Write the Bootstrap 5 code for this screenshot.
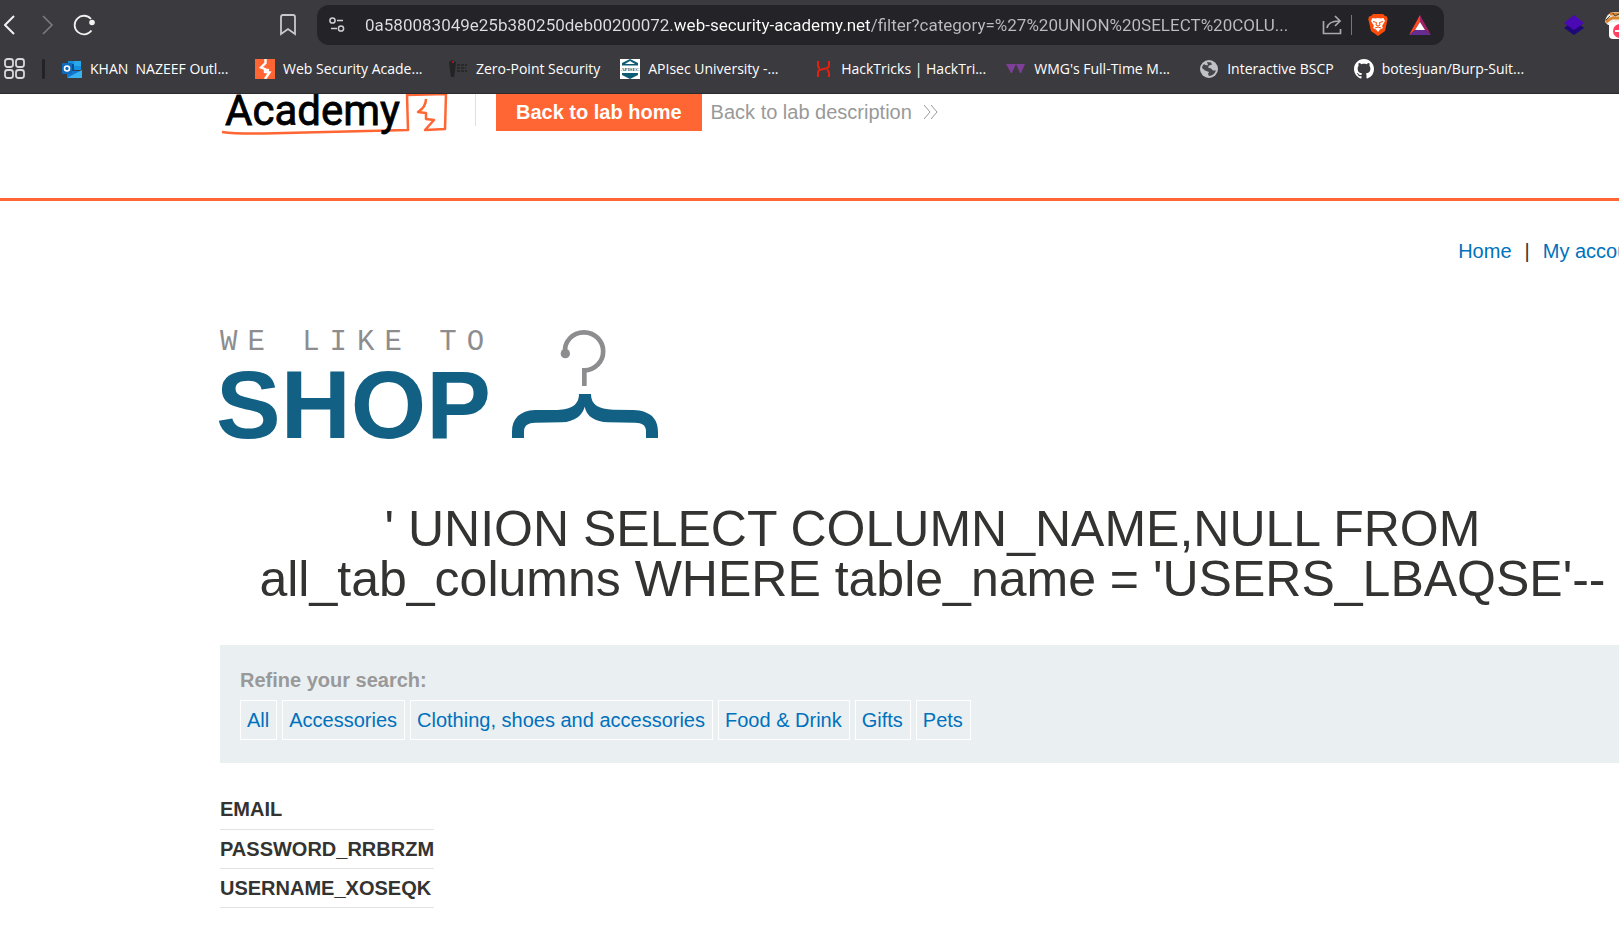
<!DOCTYPE html>
<html lang="en">
<head>
<meta charset="utf-8">
<meta name="viewport" content="width=device-width, initial-scale=1">
<title>Web Security Academy lab</title>
<link href="https://cdn.jsdelivr.net/npm/bootstrap@5.3.0/dist/css/bootstrap.min.css" rel="stylesheet">
<style>
  body { font-family: "Liberation Sans", Arial, sans-serif; font-size: 20px; line-height: 24px; color: #333332; background: #fff; overflow: hidden; }
  a { text-decoration: none; color: #0071bc; }
  svg { display: block; flex: none; }

  .browser-bar { background: #3b3a3f; border-bottom: 1px solid #2b2a2e; color: #fff; font-family: "Open Sans", "Noto Sans", sans-serif; overflow: hidden; height: 94px; }
  .tool-btn { background: none; border: 0; padding: 0; color: #f1f1f1; flex: none; }
  .tool-dim { color: #7c7b80; margin-left: 24px; }
  .tool-reload { margin-left: 19px; }
  .tool-gap { margin-left: 21px; }
  .tool-far { margin-left: 120px; }
  .nav-tools { width: 317px; padding: 0 20px 0 4px; flex: none; }
  .tool-row { height: 50px; }
  .address { background: #242328; border-radius: 12px; height: 40px; padding: 0 13px 0 12px; flex: 1 1 0; min-width: 0; }
  .address input { border: 0; outline: 0; padding: 0; height: 30px; margin: 0 16px 0 20px; font-family: Roboto, sans-serif; font-size: 17px; flex: 1 1 0; min-width: 0; color: transparent;
    background: linear-gradient(90deg, #dfdfe2 309px, #ffffff 309px, #ffffff 505px, #bdbdc1 505px); -webkit-background-clip: text; background-clip: text; }
  .extensions { width: 175px; flex: none; }
  .tool-sep { width: 1px; height: 20px; background: #77767b; }
  .marks { height: 37px; font-size: 14px; line-height: 20px; }
  .marks a { color: #fff; display: flex; align-items: center; gap: 8px; white-space: pre; flex: none; margin-right: 20px; }
  .marks a.full { width: 173px; }
  .marks-sep { width: 3px; height: 20px; background: #232226; margin: 0 17px; border-radius: 2px; }

  .page-wrap { margin-left: 220px; margin-right: -26px; }
  .lab-header { border-bottom: 3px solid #ff6633; height: 107px; }
  .lab-split { width: 1px; height: 32px; background: #e0e0e0; margin: 0 20px 0 27px; }
  .lab-home { background: #ff6633; color: #fff; font-weight: 700; height: 37px; line-height: 36px; padding: 0 20px; }
  .lab-desc { color: #999; line-height: 36px; margin-left: 9px; }
  .top-links { padding-top: 38px; gap: 13px; }
  .shop-logo { margin: 57px 0 54px; overflow: visible; }
  .sql-title { font-size: 50px; line-height: 50px; font-weight: 400; margin: 0 0 41px; }
  .filters { background: #eaeff2; padding: 23px 20px; }
  .filters-label { color: #999; font-weight: 700; margin-bottom: 8px; }
  .filters a { border: 1px solid #fff; height: 40px; line-height: 38px; padding: 0 7px 0 6px; }
  .filters .list-gap { gap: 5px; }
  .results { margin-top: 27px; }
  .results th { border-bottom: 1px solid #e3e3e3; padding: 8px 0 7px; height: 39px; line-height: 23px; }
</style>
</head>
<body>
<header class="browser-bar">
  <div class="tool-row d-flex align-items-center">
    <div class="nav-tools d-flex align-items-center">
      <button class="tool-btn" aria-label="Back"><svg width="12" height="20" fill="none" stroke="currentColor" stroke-width="2"><path d="M10 1 1 10l9 9"/></svg></button>
      <button class="tool-btn tool-dim" aria-label="Forward"><svg width="14" height="20" fill="none" stroke="currentColor" stroke-width="1.6"><path d="M3 1l9 9-9 9"/></svg></button>
      <button class="tool-btn tool-reload" aria-label="Reload"><svg width="24" height="22" fill="none" stroke="currentColor" stroke-width="1.8"><path d="M18 5A9.300 9.300 0 1 0 18.500 16.500"/><circle cx="19" cy="8.500" r="2.800" fill="currentColor" stroke="none"/></svg></button>
      <button class="tool-btn ms-auto" aria-label="Bookmark"><svg width="18" height="22" fill="none" stroke="#c9c9cc" stroke-width="1.800"><path d="M2 3q0-2 2-2h10q2 0 2 2v17l-7-5-7 5z"/></svg></button>
    </div>
    <div class="address d-flex align-items-center">
      <svg width="16" height="16" fill="none" stroke="#d0d0d3" stroke-width="1.500"><circle cx="3.500" cy="3.500" r="2.600"/><path d="M8 3.500h6M2 11.500h6"/><circle cx="12" cy="11.500" r="2.600"/></svg>
      <input type="text" aria-label="Address" value="0a580083049e25b380250deb00200072.web-security-academy.net/filter?category=%27%20UNION%20SELECT%20COLU...">
      <button class="tool-btn" aria-label="Share"><svg width="21" height="20" fill="none" stroke="#a9a9ad" stroke-width="1.700"><path d="M1.500 6v12.500h17V14M5 13c1-5 5-7 12-7M13 1l5 5-5 5"/></svg></button>
      <span class="tool-sep ms-2 me-3"></span>
      <button class="tool-btn" aria-label="Shields"><svg width="20" height="22" viewBox="0 0 20 22"><path fill="#fb4c0b" d="M5 0h10l2 2 2 .5.7 3L19 8l-2 9-7 5-7-5L1 8 .3 5.500 1 2.500 3 2z"/><path fill="#fff" d="M4.500 4l3 .6L10 4l2.500.6 3-.6 1.500 3-3 5 1 2-3 1.500L10 18l-2-2.500L5 14l1-2-3-5z"/><path stroke="#fb4c0b" fill="none" d="M5 7.500l3.500 1L8 11l2 1 2-1-.5-2.500 3.500-1M7 14l3-1 3 1"/></svg></button>
      <button class="tool-btn tool-gap" aria-label="Rewards"><svg width="22" height="20" viewBox="0 0 22 20"><path fill="#ff4724" d="M11 0v7l-5 8-6 5z"/><path fill="#9e1f63" d="M11 0l11 20-6-5-5-8z"/><path fill="#662d91" d="M0 20l6-5h10l6 5z"/><path fill="#fff" d="M11 7l5 8H6z"/></svg></button>
    </div>
    <div class="extensions d-flex align-items-center">
      <button class="tool-btn tool-far" aria-label="Extension"><svg width="20" height="20" viewBox="0 0 20 20"><path fill="#1f0878" d="M0 13l3-2.500h14L20 13l-10 7z"/><path fill="#4b08b5" d="M10 0l10 8-10 7L0 8z"/></svg></button>
      <button class="tool-btn tool-gap" aria-label="Cookie extension"><svg width="30" height="28" viewBox="0 0 30 28"><path fill="#eee" d="M0 11Q1 2 9 1h21v13H3z"/><path fill="none" stroke="#d8842c" stroke-width="3" d="M1 11q6-5 9-4h20M5 3h25"/><path fill="none" stroke="#443" d="M1 9l4-4M8 2l2 3 4-2"/><rect x="4" y="11" width="26" height="17" rx="4" fill="#fff"/><circle cx="15" cy="20" r="7" fill="#ff3f62"/><path stroke="#fff" stroke-width="2" d="M10 20h10"/></svg></button>
    </div>
  </div>
  <nav class="marks d-flex align-items-center" aria-label="Bookmarks">
    <button class="tool-btn ms-1" aria-label="Apps"><svg width="21" height="22" fill="none" stroke="#d8d8da" stroke-width="1.800"><rect x="1" y="1" width="8" height="8" rx="2.500"/><rect x="12" y="1" width="8" height="8" rx="2.500"/><rect x="1" y="12" width="8" height="8" rx="2.500"/><rect x="12" y="12" width="8" height="8" rx="2.500"/></svg></button>
    <span class="marks-sep"></span>
    <a href="#" class="full"><svg width="20" height="20"><path fill="#1490df" d="M6 2h13v9H6z"/><path fill="#28a8ea" d="M12 2h7v5h-7z"/><path fill="#0a4b91" d="M5 5h7v8H5z"/><path fill="#1378d4" d="M5 18v-6h15v7H6z"/><path fill="#38b3ef" d="M5 19l15-8v7q0 1-1 1z"/><rect y="4" width="10" height="11" rx="1" fill="#0f6cbd"/><circle cx="5" cy="9.500" r="2.500" fill="none" stroke="#fff" stroke-width="1.600"/></svg>KHAN  NAZEEF Outl...</a>
    <a href="#" class="full"><svg width="20" height="20"><path fill="#ff6633" d="M0 0h20v20H0z"/><path fill="none" stroke="#fff" stroke-width="2.400" d="M10.500 0v4L6 8.500l4 1.500v3l4.500.5L10 20M9 10.500l5 .8"/></svg>Web Security Acade...</a>
    <a href="#"><svg width="20" height="20"><path fill="#242326" d="M1 3l3-2 4 2-1 9-1 6H3l-1-6z"/><path stroke="#242326" stroke-width="1.500" stroke-dasharray="3 1" d="M9 6h10M9 9h9M9 12h10"/><path fill="#a01820" d="M4 2h2v2H4z"/></svg>Zero-Point Security</a>
    <a href="#" class="full"><svg width="20" height="20"><path fill="#fff" d="M0 0h20v20H0z"/><path fill="#0e5c73" d="M10 0l8 4v2.500H2V4zM2 14h16v2l-8 4-8-4z"/><text x="1" y="12" font-family="Liberation Serif" font-weight="700" font-size="5" fill="#0e5c73">APISEC</text><path fill="#fff" d="M10 2l5 3H5z"/></svg>APIsec University -...</a>
    <a href="#" class="full"><svg width="20" height="20" fill="none" stroke="#e5200f" stroke-width="2"><path d="M5 2v4q0 3 2 3M5 18v-4q0-3 3-3.500l5-1q3-.5 3-3.500V2M16 18v-4q0-2-2-3"/></svg>HackTricks | HackTri...</a>
    <a href="#" class="full"><svg width="20" height="20" fill="#7d3f98"><path d="M0 5h10L6 14H5zM10 5h9l-4 9h-1z"/></svg>WMG's Full-Time M...</a>
    <a href="#"><svg width="20" height="20"><circle cx="10" cy="10" r="9" fill="#bfc1c5"/><path fill="#45464b" d="M8 3l4 .5 1 2-3 1-1 2 3 1 2 2h3q-2 5-7 5.500L9 15l1-2-4-1.500-3-2.500q0-2 2-4 2 2 4 1z"/></svg>Interactive BSCP</a>
    <a href="#"><svg width="20" height="20" viewBox="0 0 16 16" fill="#fff"><path d="M8 0C3.580 0 0 3.580 0 8c0 3.540 2.290 6.530 5.470 7.590.4.070.55-.17.55-.38 0-.19-.01-.82-.01-1.490-2.010.37-2.530-.49-2.690-.94-.09-.23-.48-.94-.82-1.130-.28-.15-.68-.52-.01-.53.63-.01 1.080.58 1.230.82.72 1.210 1.870.87 2.330.66.07-.52.28-.87.51-1.070-1.780-.2-3.640-.89-3.640-3.950 0-.87.31-1.590.82-2.150-.08-.2-.36-1.020.08-2.120 0 0 .67-.21 2.200.82.64-.18 1.320-.27 2-.27s1.360.09 2 .27c1.530-1.040 2.200-.82 2.200-.82.44 1.100.16 1.920.08 2.120.51.56.82 1.270.82 2.150 0 3.070-1.870 3.750-3.650 3.950.29.25.54.73.54 1.480 0 1.070-.01 1.930-.01 2.200 0 .21.15.46.55.38A8 8 0 0 0 16 8c0-4.420-3.580-8-8-8z"/></svg>botesjuan/Burp-Suit...</a>
  </nav>
</header>

<div class="lab-header">
  <div class="page-wrap d-flex align-items-start">
    <svg width="228" height="44" viewBox="220 94 228 44" role="img" aria-label="Academy">
      <g fill="none" stroke="#ff6633" stroke-width="2.500" stroke-linejoin="round">
        <path d="M222 132q14 2 42 1.500 70-2 144-3.500l-1-35 39-1-1 35-20 1 9-10-8-1v-6l-8-1q8-5 8-13"/>
      </g>
      <text x="225" y="125" font-family="Roboto, sans-serif" font-size="42" fill="#000" stroke="#000" stroke-width=".8">Academy</text>
    </svg>
    <span class="lab-split"></span>
    <a class="lab-home" href="#">Back to lab home</a>
    <a class="lab-desc d-flex align-items-center gap-2" href="#">Back to lab description
      <svg class="ms-1" width="15" height="16" fill="none" stroke="#999"><path d="M0 1l6 7-6 7M7 1l6 7-6 7"/></svg></a>
  </div>
</div>

<main class="page-wrap">
  <nav class="top-links d-flex justify-content-end" aria-label="Account">
    <a href="#">Home</a><span>|</span><a href="#">My account</a>
  </nav>
  <svg class="shop-logo" width="450" height="130" viewBox="220 320 450 130" role="img" aria-label="We like to shop">
    <text x="220" y="350" font-family="Liberation Mono, monospace" font-size="29" letter-spacing="10" fill="#8d8d8f">WE LIKE TO</text>
    <text x="216" y="438" font-family="Liberation Sans, sans-serif" font-weight="700" font-size="97" fill="#126084">SHOP</text>
    <g transform="translate(200 310) scale(.33333)">
      <path fill="none" stroke="#8d8d8f" stroke-width="14" d="M1096 130C1090 95 1118 67 1152 67A57 57 0 0 1 1153 181V228"/>
      <circle cx="1096" cy="131" r="14" fill="#8d8d8f"/>
      <path fill="#126084" d="M936 384V365C936 325 960 302 1005 300L1065 300C1105 300 1137 290 1137 252H1173C1173 285 1195 297 1240 299L1300 300C1350 302 1374 325 1374 365V384H1338V362C1337 345 1327 339 1305 338L1225 337C1185 335 1160 320 1154 290C1148 315 1125 335 1085 337L1005 338C985 339 974 345 972 362V384Z"/>
    </g>
  </svg>
  <h1 class="sql-title text-center">' UNION SELECT COLUMN_NAME,NULL FROM<br>all_tab_columns WHERE table_name = 'USERS_LBAQSE'--</h1>
  <section class="filters">
    <div class="filters-label">Refine your search:</div>
    <div class="list-gap d-flex">
      <a href="#">All</a><a href="#">Accessories</a><a href="#">Clothing, shoes and accessories</a><a href="#">Food &amp; Drink</a><a href="#">Gifts</a><a href="#">Pets</a>
    </div>
  </section>
  <table class="results">
    <tbody>
      <tr><th scope="row">EMAIL</th></tr>
      <tr><th scope="row">PASSWORD_RRBRZM</th></tr>
      <tr><th scope="row">USERNAME_XOSEQK</th></tr>
    </tbody>
  </table>
</main>
<script src="https://cdn.jsdelivr.net/npm/bootstrap@5.3.0/dist/js/bootstrap.bundle.min.js"></script>
</body>
</html>
